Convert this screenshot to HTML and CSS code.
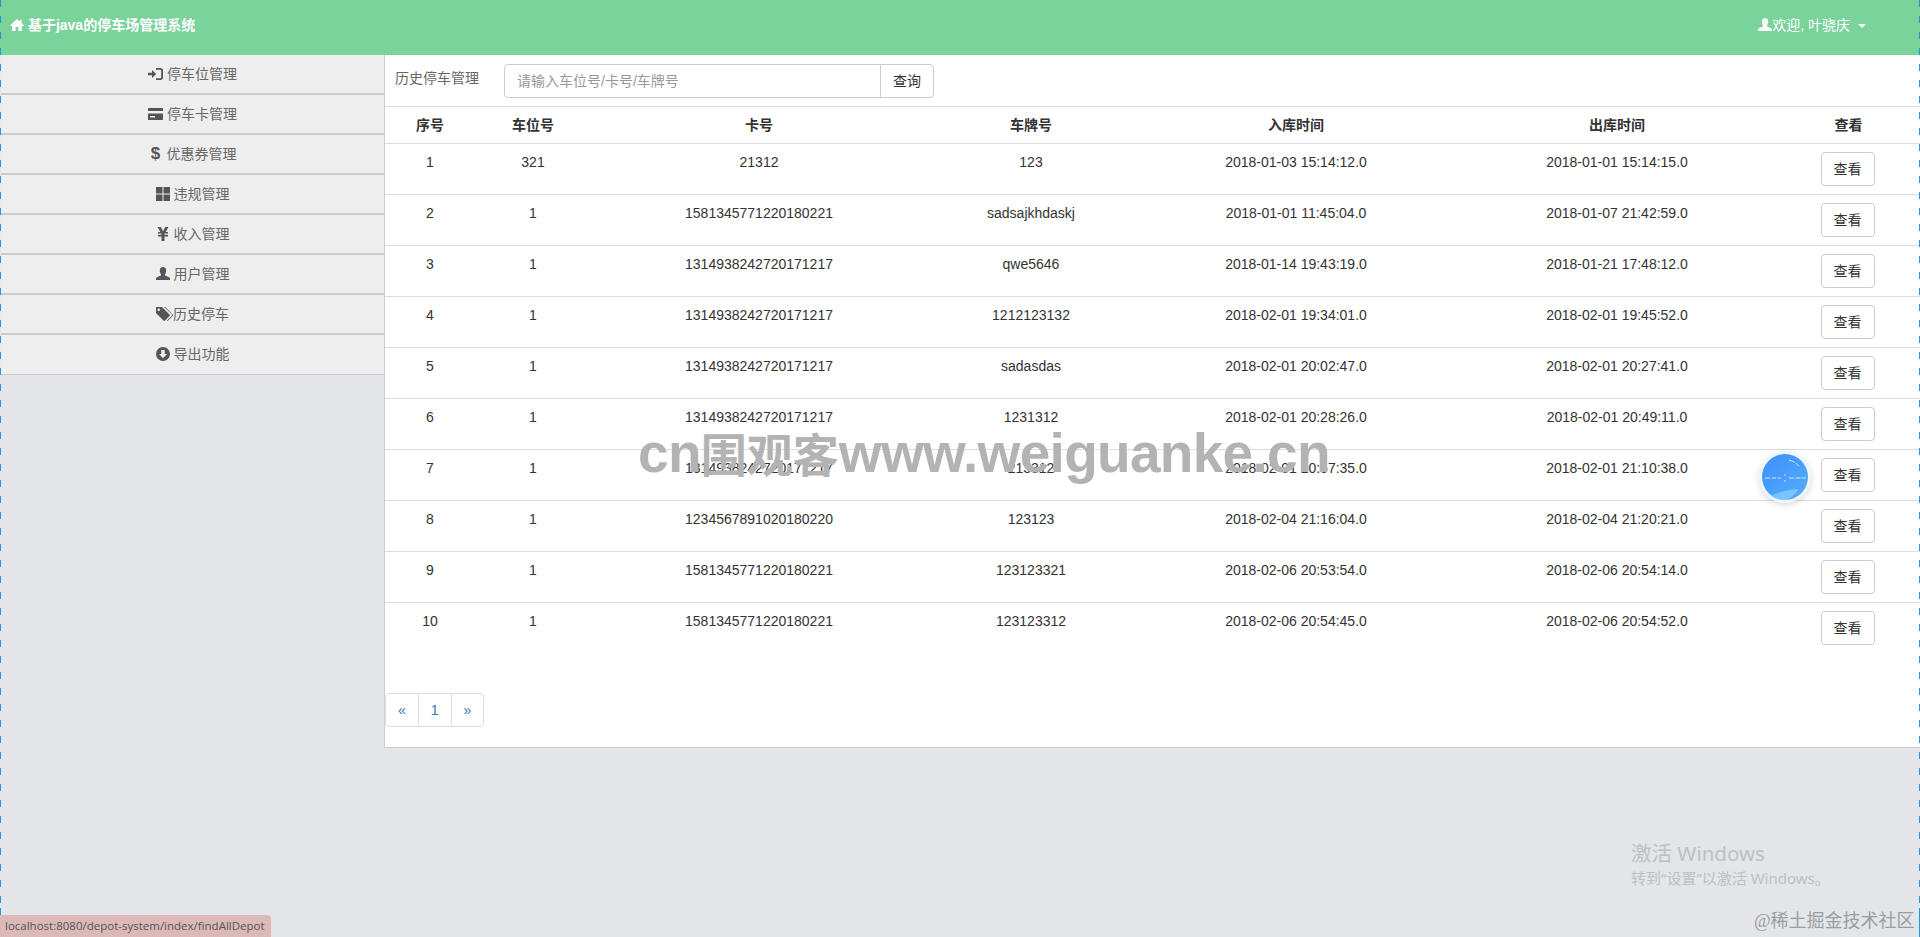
FILE: index.html
```html
<!DOCTYPE html>
<html lang="zh-CN">
<head>
  <meta charset="UTF-8" />
  <title>基于java的停车场管理系统</title>
  <link rel="stylesheet" href="styles.css">
</head>
<body>
  <nav class="navbar">
    <a class="brand" href="#">
      <svg class="icon" viewBox="0 0 14 14"><path d="M7 1 0 7.400l1 1.100 1-.9V13h3.600V9h2.800v4H12V7.600l1 .9 1-1.100-2.500-2.300V2H9.700v1.400z"/></svg>
      基于java的停车场管理系统
    </a>
    <a class="user-menu" href="#">
      <svg class="icon" viewBox="0 0 14 14"><path d="M7 0c2 0 3.200 1.500 3.200 3.500S9.200 7.300 8.800 8.100c.3 1 4.600 1.700 5.200 3.400V13H0v-1.500c.6-1.700 4.900-2.400 5.200-3.400C4.800 7.300 3.800 5.500 3.800 3.500S5 0 7 0z"/></svg>欢迎, 叶骁庆
      <span class="caret"></span>
    </a>
  </nav>

  <div class="layout">
    <aside class="sidebar">
      <a class="side-btn" href="#">
        <svg class="icon icon-wide" viewBox="0 0 15 14"><path d="M0 5.800h4V3l4.200 4L4 11V8.200H0zM8 1h4.500C14 1 15 2 15 3.500v7c0 1.500-1 2.500-2.500 2.500H8v-1.800h4.300c.6 0 .9-.4.9-.9V3.700c0-.5-.3-.9-.9-.9H8z"/></svg>
        停车位管理
      </a>
      <a class="side-btn" href="#">
        <svg class="icon icon-wide" viewBox="0 0 15 14"><path fill-rule="evenodd" d="M1 1h13c.6 0 1 .4 1 1v10c0 .6-.4 1-1 1H1c-.6 0-1-.4-1-1V2c0-.6.4-1 1-1zM0 4v2.500h15V4zM2 9v1.500h5V9z"/></svg>
        停车卡管理
      </a>
      <a class="side-btn" href="#"><span class="glyph">$</span>优惠券管理</a>
      <a class="side-btn" href="#">
        <svg class="icon" viewBox="0 0 14 14"><path d="M0 0h6.500v6.500H0zM7.500 0H14v6.500H7.500zM0 7.500h6.500V14H0zM7.500 7.500H14V14H7.500z"/></svg>
        违规管理
      </a>
      <a class="side-btn" href="#">
        <svg class="icon" viewBox="0 0 14 14"><path d="M1.500 0h3.300L7 4.200 9.200 0h3.300L9.600 5H12v1.600H8.500v1.200H12v1.600H8.500V14h-3V9.400H2V7.800h3.500V6.600H2V5h2.400z"/></svg>
        收入管理
      </a>
      <a class="side-btn" href="#">
        <svg class="icon" viewBox="0 0 14 14"><path d="M7 0c2 0 3.200 1.500 3.200 3.500S9.200 7.300 8.800 8.100c.3 1 4.600 1.700 5.200 3.400V13H0v-1.500c.6-1.700 4.900-2.400 5.200-3.400C4.800 7.300 3.800 5.500 3.800 3.500S5 0 7 0z"/></svg>
        用户管理
      </a>
      <a class="side-btn" href="#">
        <svg class="icon icon-tags" viewBox="0 0 17 14"><path fill-rule="evenodd" d="M0 0h6l7.500 7.500c.5.500.5 1.100 0 1.600L9.100 13.500c-.5.500-1.100.5-1.600 0L0 6zM2.800 1.500a1.300 1.300 0 1 0 0 2.600 1.300 1.300 0 0 0 0-2.600z"/><path d="M8 0h1.300l7.300 7.500c.5.500.5 1.100 0 1.600l-4.400 4.400c-.5.500-1 .5-1.400.2l4.800-4.800c.6-.6.600-1.400 0-2z"/></svg>历史停车
      </a>
      <a class="side-btn" href="#">
        <svg class="icon" viewBox="0 0 14 14"><path fill-rule="evenodd" d="M7 0a7 7 0 1 1 0 14A7 7 0 0 1 7 0zM5.300 3v4H3l4 4.200L11 7H8.700V3z"/></svg>
        导出功能
      </a>
    </aside>

    <main class="panel">
      <div class="search-bar">
        <span class="search-label">历史停车管理</span>
        <div class="input-group">
          <input class="search-input" type="text" placeholder="请输入车位号/卡号/车牌号" />
          <button class="btn search-btn">查询</button>
        </div>
      </div>

      <table class="data-table">
        <colgroup>
          <col class="col-no"><col class="col-slot"><col class="col-card"><col class="col-plate"><col class="col-in"><col class="col-out"><col class="col-view">
        </colgroup>
        <thead>
          <tr><th>序号</th><th>车位号</th><th>卡号</th><th>车牌号</th><th>入库时间</th><th>出库时间</th><th>查看</th></tr>
        </thead>
        <tbody>
          <tr><td>1</td><td>321</td><td>21312</td><td>123</td><td>2018-01-03 15:14:12.0</td><td>2018-01-01 15:14:15.0</td><td><button class="btn">查看</button></td></tr>
          <tr><td>2</td><td>1</td><td>1581345771220180221</td><td>sadsajkhdaskj</td><td>2018-01-01 11:45:04.0</td><td>2018-01-07 21:42:59.0</td><td><button class="btn">查看</button></td></tr>
          <tr><td>3</td><td>1</td><td>1314938242720171217</td><td>qwe5646</td><td>2018-01-14 19:43:19.0</td><td>2018-01-21 17:48:12.0</td><td><button class="btn">查看</button></td></tr>
          <tr><td>4</td><td>1</td><td>1314938242720171217</td><td>1212123132</td><td>2018-02-01 19:34:01.0</td><td>2018-02-01 19:45:52.0</td><td><button class="btn">查看</button></td></tr>
          <tr><td>5</td><td>1</td><td>1314938242720171217</td><td>sadasdas</td><td>2018-02-01 20:02:47.0</td><td>2018-02-01 20:27:41.0</td><td><button class="btn">查看</button></td></tr>
          <tr><td>6</td><td>1</td><td>1314938242720171217</td><td>1231312</td><td>2018-02-01 20:28:26.0</td><td>2018-02-01 20:49:11.0</td><td><button class="btn">查看</button></td></tr>
          <tr><td>7</td><td>1</td><td>1314938242720171217</td><td>213312</td><td>2018-02-01 20:57:35.0</td><td>2018-02-01 21:10:38.0</td><td><button class="btn">查看</button></td></tr>
          <tr><td>8</td><td>1</td><td>1234567891020180220</td><td>123123</td><td>2018-02-04 21:16:04.0</td><td>2018-02-04 21:20:21.0</td><td><button class="btn">查看</button></td></tr>
          <tr><td>9</td><td>1</td><td>1581345771220180221</td><td>123123321</td><td>2018-02-06 20:53:54.0</td><td>2018-02-06 20:54:14.0</td><td><button class="btn">查看</button></td></tr>
          <tr><td>10</td><td>1</td><td>1581345771220180221</td><td>123123312</td><td>2018-02-06 20:54:45.0</td><td>2018-02-06 20:54:52.0</td><td><button class="btn">查看</button></td></tr>
        </tbody>
      </table>

      <ul class="pagination">
        <li><a href="#">«</a></li>
        <li><a href="#">1</a></li>
        <li><a href="#">»</a></li>
      </ul>
    </main>
  </div>

  <!-- things lying over the page -->
  <div class="edge edge-left"></div>
  <div class="edge edge-right"></div>
  <div class="watermark"><span class="watermark-latin">cn</span>围观客<span class="watermark-latin">www.weiguanke.cn</span></div>
  <svg class="float-ball" viewBox="0 0 56 56">
    <defs>
      <linearGradient id="ballFill" x1="0" y1="0" x2="1" y2="1">
        <stop offset="0" stop-color="#3d8ffb"/>
        <stop offset="1" stop-color="#55aefc"/>
      </linearGradient>
    </defs>
    <circle cx="28" cy="28" r="26" fill="#eef6fd"/>
    <circle cx="28" cy="28" r="23" fill="url(#ballFill)"/>
    <path d="M14 47c8-4 18-7 28-7-4 5-9 11-14 11-5 0-10-1-14-4z" fill="#8fd0fc" opacity=".7"/>
    <path d="M8 29h16M32 29h17" stroke="#cfe4fd" stroke-width="1" stroke-dasharray="5 1.500" fill="none"/>
    <path d="M32 11c4 1 7 3 10 6" stroke="#cfe4fd" stroke-width="1" stroke-dasharray="6 1.500" fill="none"/>
    <circle cx="28" cy="26" r=".8" fill="#cfe4fd"/>
    <circle cx="28" cy="32" r=".8" fill="#cfe4fd"/>
  </svg>
  <div class="activate">
    <div class="activate-title">激活 Windows</div>
    <div class="activate-sub">转到“设置”以激活 Windows。</div>
  </div>
  <div class="credit">@稀土掘金技术社区</div>
  <div class="status-tip">localhost:8080/depot-system/index/findAllDepot</div>
</body>
</html>
```

FILE: styles.css
```css
* {
  box-sizing: border-box;
}
body {
  margin: 0;
  height: 937px;
  overflow: hidden;
  position: relative;
  background: #e3e5e8;
  color: #333;
  font-family: "Liberation Sans", "Noto Sans CJK SC", sans-serif;
  font-size: 14px;
  line-height: 20px;
}
a {
  text-decoration: none;
}
.icon {
  width: 14px;
  height: 14px;
  fill: currentColor;
  vertical-align: -2px;
}
.icon-wide {
  width: 15px;
}
.icon-tags {
  width: 17px;
}

/* top bar */
.navbar {
  height: 55px;
  background: #7ad39b;
  display: flex;
  justify-content: space-between;
  align-items: center;
  padding: 0 54px 6px 10px;
}
.brand {
  color: #fff;
  font-weight: bold;
}
.user-menu {
  color: #fff;
}
.caret {
  display: inline-block;
  margin-left: 4px;
  vertical-align: middle;
  border-top: 4px solid #fff;
  border-left: 4px solid transparent;
  border-right: 4px solid transparent;
}

/* body split */
.layout {
  display: flex;
  align-items: flex-start;
}
.sidebar {
  width: 384px;
  flex: none;
  padding-left: 1px;
}
.side-btn {
  display: block;
  height: 40px;
  padding-top: 9px;
  text-align: center;
  color: #666;
  background: #eee;
  border-bottom: 2px solid #ccc;
}
.side-btn:last-child {
  border-bottom-width: 1px;
}
.side-btn .icon {
  color: #555;
}
.glyph {
  display: inline-block;
  width: 14px;
  margin-right: 4px;
  color: #555;
  font-size: 17px;
  font-weight: bold;
}

/* main panel */
.panel {
  flex: 1;
  height: 693px;
  background: #fff;
  border-left: 1px solid #ccc;
  border-bottom: 1px solid #ccc;
}
.search-bar {
  height: 52px;
  display: flex;
  padding: 9px 0 0 10px;
  border-bottom: 1px solid #ddd;
}
.search-label {
  width: 109px;
  padding-top: 4px;
  color: #666;
}
.input-group {
  display: flex;
  height: 34px;
}
.search-input {
  width: 377px;
  height: 34px;
  padding: 6px 12px;
  border: 1px solid #ccc;
  border-radius: 4px 0 0 4px;
  font: inherit;
  color: #555;
  outline: none;
}
.search-input::placeholder {
  color: #999;
}
.btn {
  height: 34px;
  padding: 6px 12px;
  background: #fff;
  border: 1px solid #ccc;
  border-radius: 4px;
  color: #333;
  font: inherit;
  cursor: pointer;
}
.search-btn {
  margin-left: -1px;
  border-radius: 0 4px 4px 0;
}

/* table */
.data-table {
  width: 100%;
  table-layout: fixed;
  border-collapse: collapse;
}
.col-no { width: 90px; }
.col-slot { width: 116px; }
.col-card { width: 336px; }
.col-plate { width: 208px; }
.col-in { width: 322px; }
.col-out { width: 320px; }
.col-view { width: 143px; }
.data-table th,
.data-table td {
  padding: 8px;
  text-align: center;
  vertical-align: top;
}
.data-table th {
  border-bottom: 1px solid #ddd;
}
.data-table tbody tr + tr td {
  border-top: 1px solid #ddd;
}
.data-table td:last-child {
  padding-right: 10px;
}

/* pagination */
.pagination {
  display: flex;
  list-style: none;
  margin: 40px 0 0;
  padding: 0;
}
.pagination a {
  display: block;
  height: 34px;
  margin-left: -1px;
  padding: 6px 12px;
  color: #337ab7;
  background: #fff;
  border: 1px solid #ddd;
}
.pagination li:first-child a {
  margin-left: 0;
  border-radius: 4px 0 0 4px;
}
.pagination li:last-child a {
  border-radius: 0 4px 4px 0;
}

/* overlays */
.edge {
  position: absolute;
  top: 0;
  bottom: 0;
  width: 1px;
  background: linear-gradient(#1e9be0, #1e9be0) bottom / 1px 29px no-repeat,
    repeating-linear-gradient(to bottom, #1e9be0 0 7px, transparent 7px 16px);
}
.edge-left {
  left: 0;
}
.edge-right {
  right: 0;
}
.watermark {
  position: absolute;
  left: 638px;
  top: 420px;
  color: #b3b3b3;
  font-family: "Noto Sans CJK SC", sans-serif;
  font-size: 46px;
  font-weight: bold;
  line-height: 64px;
  white-space: nowrap;
}
.watermark-latin {
  font-family: "Liberation Sans", sans-serif;
  font-size: 55px;
  letter-spacing: -0.7px;
}
.float-ball {
  position: absolute;
  left: 1757px;
  top: 449px;
  width: 56px;
  height: 56px;
  filter: drop-shadow(0 2px 3px rgba(0, 0, 0, 0.15));
}
.activate {
  position: absolute;
  left: 1631px;
  top: 840px;
  color: #bcc0c5;
  font-family: "Noto Sans", "Noto Sans CJK SC", sans-serif;
}
.activate-title {
  font-size: 20.500px;
  line-height: 26px;
}
.activate-sub {
  font-size: 15px;
  line-height: 24px;
}
.credit {
  position: absolute;
  left: 1754px;
  top: 909px;
  color: #9a9da1;
  font-family: "Liberation Serif", "Noto Sans CJK SC", serif;
  font-size: 18px;
  line-height: 24px;
}
.status-tip {
  position: absolute;
  left: 0;
  bottom: 0;
  height: 22px;
  padding: 1px 6px 0 5px;
  background: #dcb9b7;
  border-radius: 0 4px 0 0;
  color: #555;
  font-family: "Open Sans", sans-serif;
  font-size: 11.500px;
}
```
